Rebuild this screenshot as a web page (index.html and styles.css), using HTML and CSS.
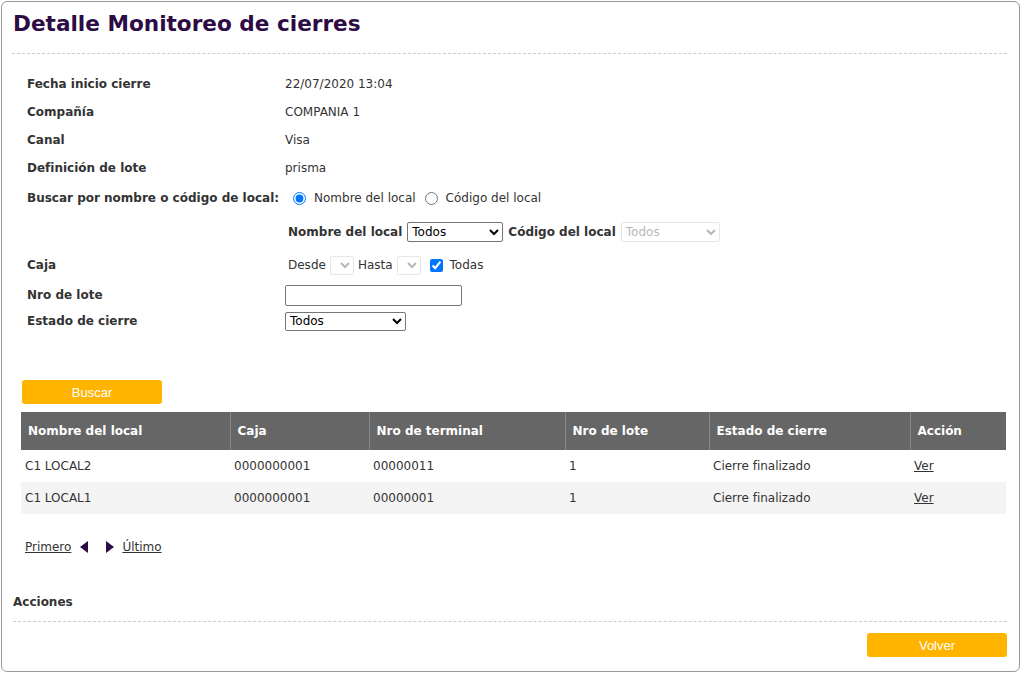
FILE: index.html
```html
<!DOCTYPE html>
<html lang="es">
<head>
<meta charset="utf-8">
<title>Detalle Monitoreo de cierres</title>
<link rel="stylesheet" href="styles.css">
</head>
<body>
<div class="panel">
  <h1 class="title">Detalle Monitoreo de cierres</h1>
  <div class="form">
    <div class="row"><div class="lbl">Fecha inicio cierre</div><div class="val">22/07/2020 13:04</div></div>
    <div class="row"><div class="lbl">Compañía</div><div class="val">COMPANIA 1</div></div>
    <div class="row"><div class="lbl">Canal</div><div class="val">Visa</div></div>
    <div class="row"><div class="lbl">Definición de lote</div><div class="val">prisma</div></div>
    <div class="row r-buscar"><div class="lbl">Buscar por nombre o código de local:</div>
      <div class="val radios">
        <label class="opt"><input type="radio" name="tipo" checked> Nombre del local</label>
        <label class="opt"><input type="radio" name="tipo"> Código del local</label>
      </div>
    </div>
    <div class="row r-local"><div class="lbl"></div>
      <div class="val inline">
        <b>Nombre del local</b>
        <select class="sel-nombre"><option>Todos</option></select>
        <b>Código del local</b>
        <select class="sel-codigo" disabled><option>Todos</option></select>
      </div>
    </div>
    <div class="row r-caja"><div class="lbl">Caja</div>
      <div class="val inline">
        <span>Desde</span><select class="sel-mini" disabled></select>
        <span>Hasta</span><select class="sel-mini" disabled></select>
        <label class="opt chk"><input type="checkbox" checked> Todas</label>
      </div>
    </div>
    <div class="row r-lote"><div class="lbl">Nro de lote</div><div class="val"><input type="text" class="txt"></div></div>
    <div class="row r-estado"><div class="lbl">Estado de cierre</div><div class="val"><select class="sel-estado"><option>Todos</option></select></div></div>
  </div>

  <button class="btn btn-buscar">Buscar</button>

  <table class="grid">
    <colgroup>
      <col class="c1"><col class="c2"><col class="c3"><col class="c4"><col class="c5"><col class="c6">
    </colgroup>
    <thead>
      <tr>
        <th>Nombre del local</th>
        <th>Caja</th>
        <th>Nro de terminal</th>
        <th>Nro de lote</th>
        <th>Estado de cierre</th>
        <th>Acción</th>
      </tr>
    </thead>
    <tbody>
      <tr><td>C1 LOCAL2</td><td>0000000001</td><td>00000011</td><td>1</td><td>Cierre finalizado</td><td><a href="#">Ver</a></td></tr>
      <tr class="alt"><td>C1 LOCAL1</td><td>0000000001</td><td>00000001</td><td>1</td><td>Cierre finalizado</td><td><a href="#">Ver</a></td></tr>
    </tbody>
  </table>

  <div class="pager">
    <a href="#">Primero</a>
    <span class="tri tri-left"></span>
    <span class="tri tri-right"></span>
    <a href="#">Último</a>
  </div>

  <h2 class="acciones">Acciones</h2>
  <div class="footer">
    <button class="btn btn-volver">Volver</button>
  </div>
</div>
</body>
</html>
```
FILE: styles.css
```css
html, body {
  margin: 0;
  padding: 0;
  background: #fff;
}
body {
  font-family: "DejaVu Sans", Verdana, sans-serif;
  font-size: 12px;
  color: #333;
}
.panel {
  margin: 1px 1px 0 1px;
  height: 671px;
  box-sizing: border-box;
  border: 1px solid #999;
  border-radius: 6px;
  padding: 0 12px 0 10px;
}
.title {
  margin: 0;
  padding: 9px 0 0 1px;
  height: 52px;
  box-sizing: border-box;
  font-size: 21.6px;
  font-weight: bold;
  color: #2d0b45;
  border-bottom: 1px dashed #ccc;
}
.form {
  padding: 16px 0 0 15px;
}
.row {
  display: grid;
  grid-template-columns: 258px 1fr;
  align-items: center;
  height: 28px;
}
.lbl {
  font-weight: bold;
  color: #333;
}
.val {
  color: #333;
}
.r-buscar { height: 32px; }
.r-local { height: 36px; }
.r-caja { height: 30px; }
.r-lote { height: 30px; }
.r-estado { height: 22px; }
.inline {
  display: flex;
  align-items: center;
  gap: 4px;
}
.radios {
  display: flex;
  align-items: center;
  gap: 9px;
  padding-left: 8px;
}
.opt {
  display: inline-flex;
  align-items: center;
  gap: 8px;
}
.opt input {
  margin: 0;
  width: 13px;
  height: 13px;
}
.r-local .inline { padding-left: 3px; gap: 5px; }
select {
  font-family: "DejaVu Sans", sans-serif;
  font-size: 12px;
  height: 20px;
  padding: 0;
  margin: 0;
  color: #000;
  border: 1px solid #767676;
  border-radius: 2px;
  background: #fff;
}
select:disabled {
  color: #999;
  border-color: #ddd;
}
.sel-nombre { width: 96px; }
.sel-codigo { width: 99px; }
.sel-mini { width: 24px; height: 19px; }
.r-caja .inline { padding-left: 3px; gap: 4px; }
.r-caja .chk { margin-left: 5px; gap: 7px; }
.txt {
  width: 177px;
  height: 21px;
  box-sizing: border-box;
  border: 1px solid #767676;
  border-radius: 2px;
  margin: 0;
}
.sel-estado { width: 121px; height: 19px; }
.btn {
  font-family: "Liberation Sans", Arial, sans-serif;
  font-size: 13px;
  color: #fff;
  background: #ffb400;
  border: none;
  border-radius: 3px;
  width: 140px;
  height: 24px;
  padding: 0;
}
.btn-buscar {
  display: block;
  margin: 48px 0 0 10px;
}
.grid {
  border-collapse: collapse;
  table-layout: fixed;
  margin: 8px 0 0 9px;
  width: 985px;
}
.c1 { width: 209px; }
.c2 { width: 139px; }
.c3 { width: 196px; }
.c4 { width: 144px; }
.c5 { width: 201px; }
.c6 { width: 96px; }
.grid th {
  background: #666;
  color: #fff;
  font-weight: bold;
  text-align: left;
  height: 38px;
  padding: 0 0 0 7px;
  border-left: 1px solid #888;
}
.grid th:first-child { border-left: none; }
.grid td {
  height: 32px;
  padding: 0 0 0 4px;
  color: #333;
}
.grid tr.alt td { background: #f4f4f4; }
a {
  color: #333;
  text-decoration: underline;
}
.pager {
  display: flex;
  align-items: center;
  margin: 25px 0 0 13px;
  height: 16px;
}
.tri {
  display: inline-block;
  width: 0;
  height: 0;
  border-top: 6px solid transparent;
  border-bottom: 6px solid transparent;
}
.tri-left {
  border-right: 8px solid #2d0b45;
  margin-left: 9px;
}
.tri-right {
  border-left: 8px solid #2d0b45;
  margin-left: 18px;
  margin-right: 8px;
}
.acciones {
  margin: 40px 0 0 1px;
  font-size: 12px;
  font-weight: bold;
  color: #333;
  height: 20px;
  border-bottom: 1px dashed #ccc;
  padding-bottom: 6px;
}
.footer {
  display: flex;
  justify-content: flex-end;
  padding: 11px 0 0 0;
}
```
